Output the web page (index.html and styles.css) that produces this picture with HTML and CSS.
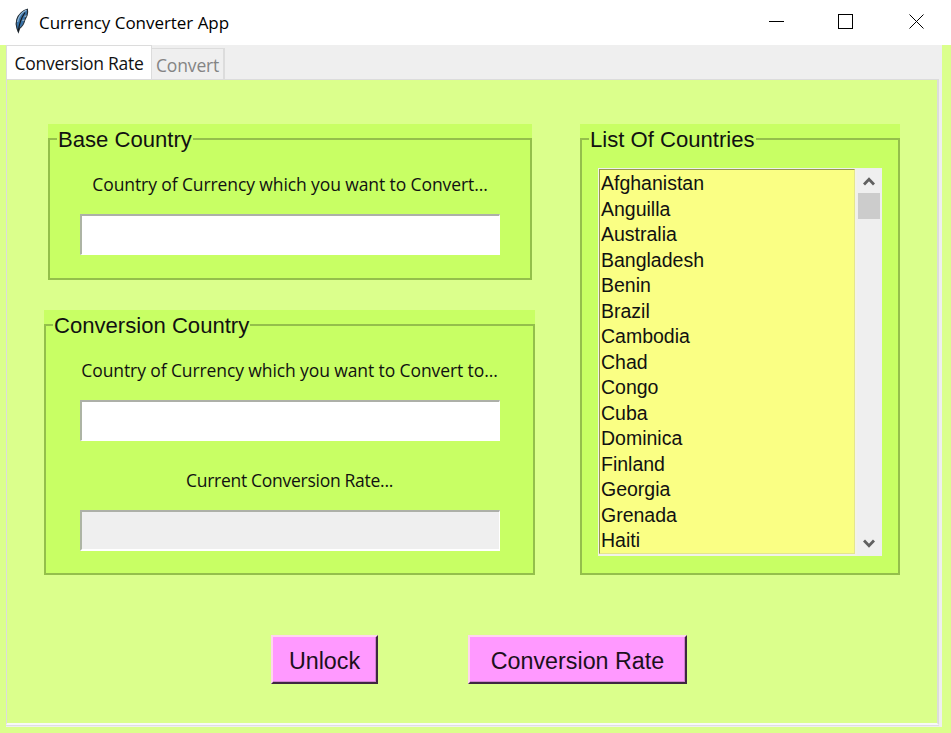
FILE: index.html
```html
<!DOCTYPE html>
<html lang="en">
<head>
<meta charset="utf-8">
<title>Currency Converter App</title>
<link rel="stylesheet" href="styles.css">
</head>
<body>
<header class="titlebar">
  <svg class="feather" width="16" height="26" viewBox="0 0 16 26">
    <path d="M13.4 1.2C9.5 2.2 4.500 6 2.800 11.500C1.700 15 2 18 3 20.500L4.400 24L5.500 20.500C8 19 10 15.500 10.800 12L13 7.500C13.600 5 14 3 13.400 1.200Z" fill="#3973a9" stroke="#222b33" stroke-width="1.100"/>
    <path d="M12.500 2C8.500 4 4.500 8 3.500 14" fill="none" stroke="#8eb4d3" stroke-width="1.300"/>
    <path d="M11 4.500C7.500 9.500 5.200 14 4.300 23.500" fill="none" stroke="#14191d" stroke-width="1.200"/>
    <path d="M10.500 12L8.500 12.500M12.500 8L10.500 8.300" stroke="#b7c6d0" stroke-width="1"/>
  </svg>
  <h1 class="title">Currency Converter App</h1>
  <svg class="controls" width="156" height="16" viewBox="0 0 156 16" fill="none" stroke="#000" shape-rendering="crispEdges">
    <path d="M0 7.500H15"/>
    <path d="M69.500 .5H83.500V14.500H69.500Z"/>
    <path d="M140.500 .5L154.500 14.500M154.500 .5L140.500 14.500" shape-rendering="auto"/>
  </svg>
</header>
<main class="notebook">
  <nav class="tabs">
    <span class="tab active">Conversion Rate</span>
    <span class="tab idle">Convert</span>
  </nav>
  <section class="page">
    <div class="columns">
      <div class="left">
        <div class="frame base">
          <fieldset class="group">
            <legend>Base Country</legend>
            <div class="field first"><label>Country of Currency which you want to Convert...</label><div class="entry"></div></div>
          </fieldset>
        </div>
        <div class="frame conversion">
          <fieldset class="group">
            <legend>Conversion Country</legend>
            <div class="field first"><label>Country of Currency which you want to Convert to...</label><div class="entry"></div></div>
            <div class="field second"><label>Current Conversion Rate...</label><div class="entry readonly"></div></div>
          </fieldset>
        </div>
      </div>
      <div class="frame countries">
        <fieldset class="group">
          <legend>List Of Countries</legend>
          <div class="listwrap">
            <ul class="list">
              <li>Afghanistan</li><li>Anguilla</li><li>Australia</li><li>Bangladesh</li><li>Benin</li><li>Brazil</li><li>Cambodia</li><li>Chad</li><li>Congo</li><li>Cuba</li><li>Dominica</li><li>Finland</li><li>Georgia</li><li>Grenada</li><li>Haiti</li>
            </ul>
            <div class="scrollbar">
              <svg width="12" height="10" viewBox="0 0 12 10"><path d="M1 8.500L6 3.200L11 8.500" fill="none" stroke="#606060" stroke-width="2.800"/></svg>
              <div class="thumb"></div>
              <svg class="down" width="12" height="10" viewBox="0 0 12 10"><path d="M1 1.500L6 6.800L11 1.500" fill="none" stroke="#606060" stroke-width="2.800"/></svg>
            </div>
          </div>
        </fieldset>
      </div>
    </div>
    <div class="actions">
      <button class="btn unlock">Unlock</button>
      <button class="btn rate">Conversion Rate</button>
    </div>
  </section>
</main>
</body>
</html>
```
FILE: styles.css
```css
* { box-sizing: border-box; }
body { margin: 0; width: 951px; height: 733px; overflow: hidden; background: #dbff8c; color: #111; font-family: "Open Sans", "Noto Sans", sans-serif; white-space: nowrap; }
.titlebar { height: 45px; background: #fff; display: flex; align-items: flex-start; padding: 8px 26px 0 14px; }
.title { margin: 2px 0 0 9px; font-size: 17px; line-height: 26px; font-weight: 400; color: #000; letter-spacing: -.04px; }
.controls { margin: 6px 0 0 auto; }
.notebook { width: 936px; height: 682px; margin-left: 6px; background: #efefef; display: flex; flex-direction: column; }
.tabs { height: 34px; display: flex; align-items: flex-end; }
.tab { display: block; border: 1px solid #dcdcdc; border-bottom: 0; font-size: 17.5px; line-height: 24px; }
.active { width: 146px; height: 34px; padding: 5px 0 0 7.500px; background: #fff; letter-spacing: -.28px; }
.idle { width: 73px; height: 31px; padding: 4px 0 0 4px; color: #848484; border-width: 1px 2px 0 0; letter-spacing: -.15px; }
.page { width: 933px; height: 646px; background: #dbff8c; border: 1px solid #dcdcdc; border-right-width: 2px; border-bottom: 2px solid #f8f8f8; padding: 44px 0 0 37px; box-shadow: 0 1px #dedee2; }
.columns { display: flex; gap: 45px; }
.left { width: 491px; display: flex; flex-direction: column; gap: 30px; }
.frame { background: #c8ff64; }
.base { width: 484px; height: 156px; margin-left: 4px; }
.conversion { width: 491px; height: 265px; }
.countries { width: 320px; height: 451px; }
.group { margin: 0; padding: 0; min-width: 0; height: 100%; border: 2px solid #94bf4b; }
legend { height: 30px; line-height: 32px; margin-left: 7px; padding: 0 1px; font-family: "Liberation Sans", Arial, sans-serif; font-size: 22.100px; }
.field { display: flex; flex-direction: column; align-items: center; }
.field label { font-size: 17.5px; line-height: 24px; letter-spacing: -.1px; }
.second label { letter-spacing: -.28px; }
.first { padding-top: 18px; }
.second { padding-top: 27px; }
.entry { width: 420px; height: 41px; margin-top: 18px; background: #fff; border: 1px solid #fff; border-left: 2px solid #adb4a4; border-top: 2px solid #adb0a8; }
.readonly { background: #efefef; border-bottom-width: 2px; }
.listwrap { display: flex; margin: 14px 0 0 16px; width: 284px; height: 388px; background: #f2f2e8; border-top: 1px solid #eee; }
.list { list-style: none; margin: 0 0 2px 1px; padding: 1px 0 0 1px; width: 256px; height: 385px; background: #faff84; border-left: 1px solid #96984c; border-top: 1px solid #96984c; border-right: 1px solid #e5e68c; border-bottom: 1px solid #e5e68c; font-family: "Liberation Sans", Arial, sans-serif; font-size: 19.5px; line-height: 25.500px; overflow: hidden; }
.list li { height: 25.500px; }
.scrollbar { margin-left: 2px; width: 25px; height: 387px; background: #efefef; display: flex; flex-direction: column; align-items: center; padding: 7px 2px 0 0; }
.thumb { width: 22px; height: 26px; margin-top: 7px; background: #ccc; align-self: flex-start; margin-left: 1px; }
.down { margin-top: auto; margin-bottom: 7px; }
.actions { display: flex; gap: 90px; margin: 60px 0 0 227px; }
.btn { padding: 3px 0 0; height: 49px; background: #ff99ff; border: 2px solid; border-color: #ffd5ee #3e2740 #3e2740 #ffd5ee; box-shadow: inset -1px -1px #cf83cf; font-family: "Liberation Sans", Arial, sans-serif; font-size: 23.300px; color: #1c101c; }
.unlock { width: 107px; }
.rate { width: 219px; }
```
